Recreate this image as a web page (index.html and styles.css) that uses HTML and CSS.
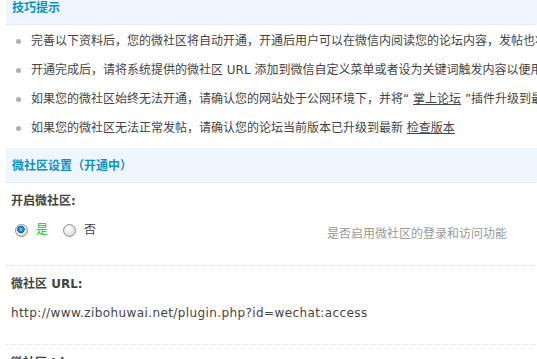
FILE: index.html
```html
<!DOCTYPE html>
<html lang="zh-CN">
<head>
<meta charset="utf-8">
<title>微社区设置</title>
<link rel="stylesheet" href="styles.css">
</head>
<body>
<div class="page">
  <div class="part-head">技巧提示</div>
  <ul class="tips">
    <li>完善以下资料后，您的微社区将自动开通，开通后用户可以在微信内阅读您的论坛内容，发帖也将同步到您的论坛</li>
    <li>开通完成后，请将系统提供的微社区 <span class="lat">URL</span> 添加到微信自定义菜单或者设为关键词触发内容以便用户访问</li>
    <li>如果您的微社区始终无法开通，请确认您的网站处于公网环境下，并将“ <a href="#">掌上论坛</a> ”插件升级到最新版本</li>
    <li>如果您的微社区无法正常发帖，请确认您的论坛当前版本已升级到最新 <a href="#">检查版本</a></li>
  </ul>
  <div class="part-head">微社区设置（开通中）</div>

  <div class="setting">
    <div class="label">开启微社区:</div>
    <div class="value-row">
      <div class="value">
        <label class="opt checked"><input type="radio" name="open" checked>是</label>
        <label class="opt"><input type="radio" name="open">否</label>
      </div>
      <div class="desc">是否启用微社区的登录和访问功能</div>
    </div>
  </div>

  <div class="setting">
    <div class="label">微社区 <span class="lat">URL:</span></div>
    <div class="value-row">
      <div class="value url">http://www.zibohuwai.net/plugin.php?id=wechat:access</div>
    </div>
  </div>

  <div class="setting">
    <div class="label">微社区 <span class="lat">Id:</span></div>
    <div class="value-row">
      <div class="value url">&nbsp;</div>
    </div>
  </div>
</div>
</body>
</html>
```
FILE: styles.css
```css
html, body {
  margin: 0;
  padding: 0;
  background: #fff;
  overflow: hidden;
}

body {
  font-family: "DejaVu Sans", "Noto Sans CJK SC", sans-serif;
  font-size: 12px;
  color: #333;
}

.page {
  width: 1000px;
  margin: -10px 0 0 6px;
}

.part-head {
  background: #eff6fd;
  border-bottom: 1px dotted #cfe6f8;
  color: #0893c6;
  font-weight: bold;
  padding: 11px 0 9px 6px;
  line-height: 14px;
}

.tips {
  list-style: none;
  margin: 0;
  padding: 2px 0 5px 0;
}

.tips li {
  position: relative;
  height: 29px;
  line-height: 29px;
  padding-left: 25px;
  white-space: nowrap;
  color: #444;
}

.tips li::before {
  content: "";
  position: absolute;
  left: 10px;
  top: 12px;
  width: 5px;
  height: 5px;
  border-radius: 50%;
  background: #b0b0b0;
}

.tips a {
  color: #444;
  text-decoration: underline;
}

.setting {
  border-bottom: 1px dotted #cfe6f8;
}

.label {
  font-weight: bold;
  color: #444;
  padding: 11px 0 7px 5px;
  line-height: 14px;
}

.value-row {
  display: flex;
  align-items: flex-start;
  padding: 5px 0 21px 0;
}

.value {
  width: 315px;
  flex: none;
  line-height: 20px;
  display: flex;
  align-items: center;
  padding-left: 9px;
  box-sizing: border-box;
}

.value.url {
  width: auto;
  white-space: nowrap;
  padding-left: 5px;
  letter-spacing: 0.4px;
  color: #444;
}

.opt {
  display: flex;
  align-items: center;
  margin-right: 15px;
  color: #444;
}

.opt.checked {
  color: #00d000;
}

.opt input {
  appearance: none;
  -webkit-appearance: none;
  width: 13px;
  height: 13px;
  margin: 0 8px 0 0;
  border-radius: 50%;
  border: 1px solid #8e8f8f;
  box-sizing: border-box;
  background: radial-gradient(circle at 40% 35%, #ffffff 0%, #e6e6e6 55%, #c8c8c8 100%);
}

.opt input:checked {
  background:
    radial-gradient(circle at 45% 40%, #8fd0f5 0px, #2a8fd0 2px, #0c5d9c 3.5px, transparent 4px),
    radial-gradient(circle at 40% 35%, #ffffff 0%, #e6e6e6 55%, #c8c8c8 100%);
}

.desc {
  margin-top: 4px;
  line-height: 20px;
  padding-left: 6px;
  color: #999;
  white-space: nowrap;
}
```
